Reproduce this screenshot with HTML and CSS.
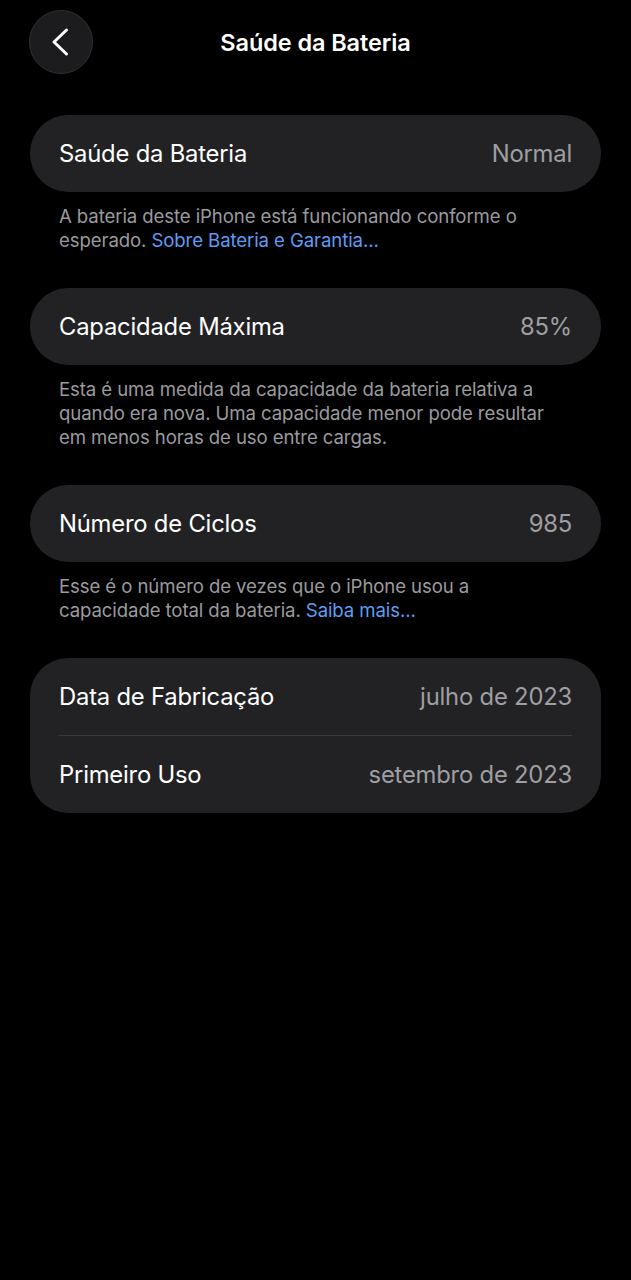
FILE: index.html
```html
<!DOCTYPE html>
<html lang="pt-BR">
<head>
<meta charset="utf-8">
<link rel="stylesheet" href="styles.css">
</head>
<body>
<div class="screen">
  <header class="nav">
    <button class="back" aria-label="Voltar">
      <svg width="24" height="30" viewBox="0 0 24 30"><path d="M17.5 3 L5 15 L17.5 27" fill="none" stroke="#fff" stroke-width="3" stroke-linecap="round" stroke-linejoin="round"/></svg>
    </button>
    <h1 class="title">Saúde da Bateria</h1>
  </header>

  <section class="group">
    <div class="card">
      <div class="row"><span class="label">Saúde da Bateria</span><span class="value">Normal</span></div>
    </div>
    <p class="foot">A bateria deste iPhone está funcionando conforme o<br>esperado. <a class="link">Sobre Bateria e Garantia...</a></p>
  </section>

  <section class="group">
    <div class="card">
      <div class="row"><span class="label">Capacidade Máxima</span><span class="value">85%</span></div>
    </div>
    <p class="foot">Esta é uma medida da capacidade da bateria relativa a<br>quando era nova. Uma capacidade menor pode resultar<br>em menos horas de uso entre cargas.</p>
  </section>

  <section class="group">
    <div class="card">
      <div class="row"><span class="label">Número de Ciclos</span><span class="value">985</span></div>
    </div>
    <p class="foot">Esse é o número de vezes que o iPhone usou a<br>capacidade total da bateria. <a class="link">Saiba mais...</a></p>
  </section>

  <section class="group">
    <div class="card">
      <div class="row"><span class="label">Data de Fabricação</span><span class="value">julho de 2023</span></div>
      <div class="sep"></div>
      <div class="row"><span class="label">Primeiro Uso</span><span class="value">setembro de 2023</span></div>
    </div>
  </section>
</div>
</body>
</html>
```

FILE: styles.css
```css
* { box-sizing: border-box; }
html, body {
  margin: 0;
  padding: 0;
  background: #000;
}
body {
  font-family: Inter, "Noto Sans", "Liberation Sans", sans-serif;
  color: #fff;
  width: 631px;
  min-height: 1280px;
}
.screen {
  padding: 10px 30px 0 30px;
}
.nav {
  position: relative;
  height: 64px;
  display: flex;
  align-items: center;
  justify-content: center;
}
.back {
  position: absolute;
  left: -1px;
  top: 0;
  width: 64px;
  height: 64px;
  border-radius: 50%;
  background: #1c1c1e;
  border: 1px solid #303033;
  display: flex;
  align-items: center;
  justify-content: center;
  padding: 0;
}
.title {
  margin: 0;
  font-size: 23.5px;
  font-weight: 600;
  letter-spacing: -0.1px;
}
.group {
  margin-top: 36px;
}
.group:first-of-type {
  margin-top: 41px;
}
.card {
  background: #222224;
  border-radius: 38px;
  padding: 0 29px;
}
.row {
  height: 77px;
  display: flex;
  align-items: center;
  justify-content: space-between;
  font-size: 23.8px;
  letter-spacing: -0.2px;
}
.label { color: #fff; }
.value { color: #9e9ea3; }
.sep {
  height: 1px;
  background: #3a3a3d;
}
.foot {
  margin: 12px 0 0 0;
  padding: 0 29px;
  font-size: 18.6px;
  line-height: 24px;
  color: #9a9a9f;
  letter-spacing: -0.1px;
  white-space: nowrap;
}
.link {
  color: #5b9df5;
}
```
